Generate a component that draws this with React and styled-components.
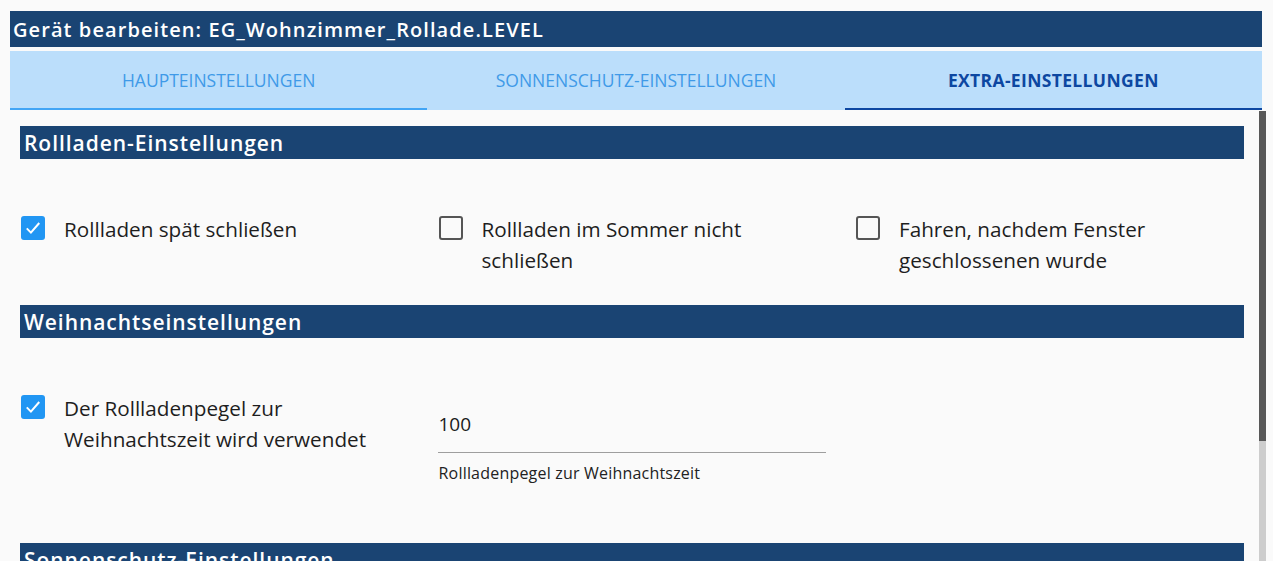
import React from "react";
import styled, { createGlobalStyle } from "styled-components";

const GlobalStyle = createGlobalStyle`
  html, body {
    margin: 0;
    padding: 0;
    background: #fafafa;
    overflow: hidden;
  }
  body {
    font-family: "Open Sans", "DejaVu Sans", sans-serif;
  }
`;

const Dialog = styled.div`
  width: 1273px;
  height: 561px;
  box-sizing: border-box;
  padding: 11px 11px 0 10px;
  display: flex;
  flex-direction: column;
  background: #fafafa;
`;

const TitleBar = styled.div`
  height: 36px;
  background: #1a4473;
  color: #fff;
  font-size: 20px;
  font-weight: 600;
  display: flex;
  align-items: center;
  padding-left: 3px;
  letter-spacing: 1.08px;
`;

const Tabs = styled.div`
  margin-top: 4px;
  height: 59px;
  background: #bbdefb;
  display: grid;
  grid-template-columns: repeat(3, 1fr);
`;

const Tab = styled.div`
  display: flex;
  align-items: center;
  justify-content: center;
  font-size: 17.5px;
  text-transform: uppercase;
  font-weight: ${(p) => (p.$active ? 700 : 400)};
  letter-spacing: ${(p) => (p.$active ? "0.35px" : "0")};
  color: ${(p) => (p.$active ? "#0d47a1" : "#3f9ae8")};
  border-bottom: 2px solid ${(p) => p.$line || "transparent"};
`;

const Scroller = styled.div`
  flex: 1;
  display: flex;
  min-height: 0;
  margin-top: 1px;
`;

const Content = styled.div`
  flex: 1;
  padding: 15px 15px 0 10px;
  overflow: hidden;
`;

const Scrollbar = styled.div`
  width: 7px;
  margin-right: -4px;
  background: #cdcdcd;
  display: flex;
  flex-direction: column;
`;

const Thumb = styled.div`
  height: 330px;
  background: #585858;
`;

const SectionHeader = styled.div`
  height: 33px;
  background: #1a4473;
  color: #fff;
  font-size: 21px;
  font-weight: 600;
  letter-spacing: 0.95px;
  display: flex;
  align-items: center;
  padding-left: 4px;
`;

const Row = styled.div`
  display: grid;
  grid-template-columns: repeat(3, 417.5px);
  padding: 55px 0 29px;
  align-items: start;
`;

const CheckItem = styled.label`
  display: flex;
  align-items: flex-start;
  gap: 19px;
  padding-left: 1px;
  padding-right: 43px;
  font-size: 20.7px;
  line-height: 31px;
  color: #1e1e1e;
`;

const Box = styled.span`
  flex: none;
  width: 24px;
  height: 24px;
  margin-top: 2px;
  box-sizing: border-box;
  border-radius: 3px;
  display: flex;
  align-items: center;
  justify-content: center;
  background: ${(p) => (p.$checked ? "#2196f3" : "transparent")};
  border: ${(p) => (p.$checked ? "none" : "2px solid #555")};
`;

const Field = styled.div`
  margin-top: 16px;
  width: 388px;
  margin-bottom: 31px;
`;

const FieldValue = styled.div`
  font-size: 19px;
  line-height: 30px;
  color: #1c1c1c;
  padding-bottom: 13px;
  border-bottom: 1px solid #9e9e9e;
  padding-left: 1px;
`;

const Helper = styled.div`
  margin-top: 10px;
  font-size: 16px;
  line-height: 20px;
  letter-spacing: 0.2px;
  color: #222;
  padding-left: 1px;
`;

const Check = ({ checked, children }) => (
  <CheckItem>
    <Box $checked={checked}>
      {checked && (
        <svg width="20" height="20" viewBox="0 0 24 24" fill="none">
          <path d="M4.5 12.5l5 5L19.5 6" stroke="#fff" strokeWidth="2.4" />
        </svg>
      )}
    </Box>
    <span>{children}</span>
  </CheckItem>
);

export default function App() {
  return (
    <>
      <GlobalStyle />
      <Dialog>
        <TitleBar>Gerät bearbeiten: EG_Wohnzimmer_Rollade.LEVEL</TitleBar>
        <Tabs>
          <Tab $line="#42a5f5">Haupteinstellungen</Tab>
          <Tab>Sonnenschutz-Einstellungen</Tab>
          <Tab $active $line="#0d47a1">Extra-Einstellungen</Tab>
        </Tabs>
        <Scroller>
          <Content>
            <SectionHeader>Rollladen-Einstellungen</SectionHeader>
            <Row>
              <Check checked>Rollladen spät schließen</Check>
              <Check>Rollladen im Sommer nicht schließen</Check>
              <Check>Fahren, nachdem Fenster geschlossenen wurde</Check>
            </Row>
            <SectionHeader>Weihnachtseinstellungen</SectionHeader>
            <Row>
              <Check checked>Der Rollladenpegel zur Weihnachtszeit wird verwendet</Check>
              <Field>
                <FieldValue>100</FieldValue>
                <Helper>Rollladenpegel zur Weihnachtszeit</Helper>
              </Field>
            </Row>
            <SectionHeader>Sonnenschutz-Einstellungen</SectionHeader>
          </Content>
          <Scrollbar>
            <Thumb />
          </Scrollbar>
        </Scroller>
      </Dialog>
    </>
  );
}
